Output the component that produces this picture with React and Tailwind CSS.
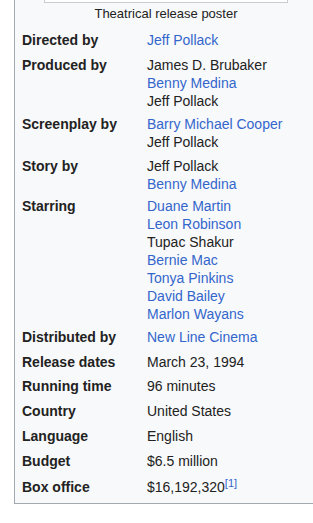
const rows = [
  { label: 'Directed by', pt: 'pt-[0px]', values: [{ text: 'Jeff Pollack', link: true }] },
  {
    label: 'Produced by',
    pt: 'pt-[7px]',
    values: [
      { text: 'James D. Brubaker' },
      { text: 'Benny Medina', link: true },
      { text: 'Jeff Pollack' },
    ],
  },
  {
    label: 'Screenplay by',
    pt: 'pt-[5px]',
    values: [{ text: 'Barry Michael Cooper', link: true }, { text: 'Jeff Pollack' }],
  },
  {
    label: 'Story by',
    pt: 'pt-[6px]',
    values: [{ text: 'Jeff Pollack' }, { text: 'Benny Medina', link: true }],
  },
  {
    label: 'Starring',
    pt: 'pt-[4px]',
    values: [
      { text: 'Duane Martin', link: true },
      { text: 'Leon Robinson', link: true },
      { text: 'Tupac Shakur' },
      { text: 'Bernie Mac', link: true },
      { text: 'Tonya Pinkins', link: true },
      { text: 'David Bailey', link: true },
      { text: 'Marlon Wayans', link: true },
    ],
  },
  { label: 'Distributed by', pt: 'pt-[5px]', values: [{ text: 'New Line Cinema', link: true }] },
  { label: 'Release dates', pt: 'pt-[7px]', values: [{ text: 'March 23, 1994' }] },
  { label: 'Running time', pt: 'pt-[6px]', values: [{ text: '96 minutes' }] },
  { label: 'Country', pt: 'pt-[7px]', values: [{ text: 'United States' }] },
  { label: 'Language', pt: 'pt-[7px]', values: [{ text: 'English' }] },
  { label: 'Budget', pt: 'pt-[7px]', values: [{ text: '$6.5 million' }] },
  { label: 'Box office', pt: 'pt-[8px]', values: [{ text: '$16,192,320', ref: '[1]' }] },
]

const App = () => {
  return (
    <div
      className="w-[313px] h-[523px] overflow-hidden bg-white text-[#222]"
      style={{ fontFamily: '"Liberation Sans", Arial, sans-serif' }}
    >
      <div className="ml-[14px] w-[303px] border-l border-b border-[#a2a9b1] bg-[#f8f9fa] pb-[7px]">
        {/* bottom of the poster frame */}
        <div className="ml-[29px] w-[244px] h-[3px] bg-white border-x border-b border-[#c8ccd1]"></div>

        <div className="pt-[2px] text-[13px] leading-[18px] text-center">Theatrical release poster</div>

        <div className="mt-[8px] px-[7px]">
          {rows.map((row) => (
            <div key={row.label} className={`grid grid-cols-[125px_1fr] ${row.pt}`}>
              <div className="text-[14px] leading-[18px] font-bold">{row.label}</div>
              <div className="text-[14px] leading-[18px]">
                {row.values.map((v, i) => (
                  <div key={i} className={v.link ? 'text-[#3366cc]' : ''}>
                    {v.text}
                    {v.ref && (
                      <span className="relative top-[-5px] text-[11px] leading-none text-[#3366cc]">{v.ref}</span>
                    )}
                  </div>
                ))}
              </div>
            </div>
          ))}
        </div>
      </div>
    </div>
  )
}

export default App
